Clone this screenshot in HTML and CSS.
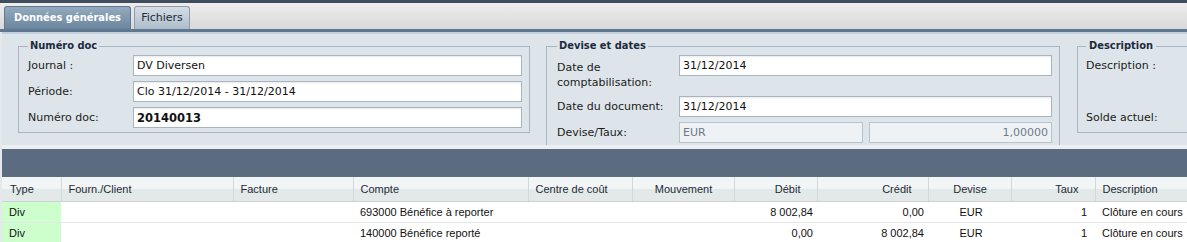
FILE: index.html
```html
<!DOCTYPE html>
<html lang="fr">
<head>
    <meta charset="UTF-8">
    <title>Écriture diverse</title>
    <link rel="stylesheet" href="styles.css">
</head>
<body>
    <div class="topbar"></div>
    <div class="tabs">
        <div class="tab active">Données générales</div>
        <div class="tab">Fichiers</div>
    </div>

    <div class="main">
        <div class="panel">
            <fieldset class="group g-doc">
                <legend>Numéro doc</legend>
                <div class="row"><label>Journal :</label><input class="field" type="text" value="DV Diversen" readonly></div>
                <div class="row"><label>Période:</label><input class="field" type="text" value="Clo 31/12/2014 - 31/12/2014" readonly></div>
                <div class="row"><label>Numéro doc:</label><input class="field num" type="text" value="20140013" readonly></div>
            </fieldset>

            <fieldset class="group g-dates">
                <legend>Devise et dates</legend>
                <div class="row two"><label>Date de<br>comptabilisation:</label><input class="field" type="text" value="31/12/2014" readonly></div>
                <div class="row"><label>Date du document:</label><input class="field" type="text" value="31/12/2014" readonly></div>
                <div class="row"><label>Devise/Taux:</label>
                    <div class="pair">
                        <input class="field off" type="text" value="EUR" readonly>
                        <input class="field off right" type="text" value="1,00000" readonly>
                    </div>
                </div>
            </fieldset>

            <fieldset class="group g-desc">
                <legend>Description</legend>
                <div class="row"><label>Description :</label></div>
                <div class="row"></div>
                <div class="row"><label>Solde actuel:</label></div>
            </fieldset>
        </div>

        <div class="strip"></div>
        <div class="toolbar"></div>

        <table class="grid">
            <colgroup>
                <col style="width:59px"><col style="width:172px"><col style="width:120px">
                <col style="width:175px"><col style="width:104px"><col style="width:102px">
                <col style="width:83px"><col style="width:111px"><col style="width:83px">
                <col style="width:84px"><col style="width:92px">
            </colgroup>
            <thead>
                <tr>
                    <th class="first">Type</th>
                    <th>Fourn./Client</th>
                    <th>Facture</th>
                    <th>Compte</th>
                    <th>Centre de coût</th>
                    <th class="mid">Mouvement</th>
                    <th class="num">Débit</th>
                    <th class="num">Crédit</th>
                    <th class="mid">Devise</th>
                    <th class="num">Taux</th>
                    <th>Description</th>
                </tr>
            </thead>
            <tbody>
                <tr>
                    <td class="type">Div</td>
                    <td></td>
                    <td></td>
                    <td>693000 Bénéfice à reporter</td>
                    <td></td>
                    <td></td>
                    <td class="num">8 002,84</td>
                    <td class="num">0,00</td>
                    <td class="mid">EUR</td>
                    <td class="num rate">1</td>
                    <td>Clôture en cours</td>
                </tr>
                <tr>
                    <td class="type">Div</td>
                    <td></td>
                    <td></td>
                    <td>140000 Bénéfice reporté</td>
                    <td></td>
                    <td></td>
                    <td class="num">0,00</td>
                    <td class="num">8 002,84</td>
                    <td class="mid">EUR</td>
                    <td class="num rate">1</td>
                    <td>Clôture en cours</td>
                </tr>
            </tbody>
        </table>
    </div>
</body>
</html>
```

FILE: styles.css
```css
*{
    margin: 0;
    padding: 0;
    box-sizing: border-box;
}
body{
    width: 1187px;
    height: 242px;
    overflow: hidden;
    background-color: #fff;
    font-family: "DejaVu Sans", sans-serif;
    font-size: 11px;
    color: #1b1b1b;
}
.topbar{
    height: 3px;
    background-color: #3f4d5f;
}
.tabs{
    height: 29px;
    display: flex;
    align-items: flex-end;
    gap: 3px;
    padding-left: 4px;
    background: linear-gradient(#ededed, #d9d9d9);
    border-bottom: 3px solid #5e7892;
}
.tab{
    width: 56px;
    height: 23px;
    line-height: 21px;
    text-align: center;
    border: 1px solid #8d9dad;
    border-bottom: 0;
    border-radius: 3px 3px 0 0;
    background: linear-gradient(#d5dde4, #aebdca);
    color: #1f2b39;
}
.tab.active{
    width: 127px;
    font-family: "DejaVu Sans Condensed", "DejaVu Sans", sans-serif;
    font-stretch: condensed;
    font-weight: bold;
    color: #fff;
    border-color: #5e7892;
    background: linear-gradient(#94aabf, #6a859e);
}
.main{
    border-left: 2px solid #e6e9ec;
}
.panel{
    height: 113px;
    overflow: hidden;
    display: flex;
    align-items: flex-start;
    gap: 16px;
    padding: 5px 0 0 16px;
    background-color: #dee5ea;
    border-top: 2px solid #c3d0db;
}
.group{
    flex: none;
    border: 1px solid #a9b5c1;
    padding: 0 7px 4px 9px;
}
.group legend{
    padding: 0 2px;
    line-height: 14px;
    font-family: "DejaVu Sans Condensed", "DejaVu Sans", sans-serif;
    font-stretch: condensed;
    font-weight: bold;
    color: #1c2a3b;
}
.g-doc{
    width: 512px;
}
.g-dates{
    width: 514px;
    padding-left: 10px;
}
.g-desc{
    width: 200px;
    margin-left: 1px;
    padding-left: 8px;
}
.g-desc legend{
    padding: 0 3px;
}
.row{
    display: grid;
    grid-template-columns: 105px 1fr;
    align-items: center;
    min-height: 21px;
    margin-top: 5px;
}
.row:first-of-type{
    margin-top: 2px;
}
.g-dates .row{
    grid-template-columns: 122px 1fr;
}
.g-dates .row.two{
    align-items: start;
    margin-bottom: 6px;
}
.g-dates .row.two label{
    padding-top: 5px;
    line-height: 15px;
}
.field{
    width: 100%;
    height: 21px;
    border: 1px solid #a7b4c1;
    background-color: #fff;
    padding: 0 3px;
    font-family: "DejaVu Sans", sans-serif;
    font-size: 11px;
    color: #111;
    box-shadow: inset 0 2px 2px -1px rgba(0,0,0,0.09);
    outline: none;
}
.field.num{
    font-weight: bold;
    font-size: 11.5px;
}
.pair{
    display: flex;
    gap: 6px;
}
.field.off{
    background-color: #eff2f4;
    border-color: #b8c3cc;
    color: #6b7b8b;
    box-shadow: none;
}
.field.right{
    text-align: right;
}
.strip{
    height: 4px;
    background-color: #eceff1;
}
.toolbar{
    height: 28px;
    background-color: #5b6c80;
}
.grid{
    width: 1185px;
    table-layout: fixed;
    border-collapse: collapse;
    font-family: "Liberation Sans", Arial, sans-serif;
    font-size: 11px;
}
.grid th{
    height: 24px;
    padding: 0 6px 0 7px;
    text-align: left;
    font-weight: normal;
    color: #1e2a36;
    background: linear-gradient(#f2f5f6 50%, #e3e9e9 50%);
    border-right: 1px solid #d1d8da;
    border-bottom: 1px solid #cbd3d5;
    white-space: nowrap;
}
.grid th.first{
    padding-left: 8px;
}
.grid th.mid{
    text-align: center;
}
.grid th.num{
    text-align: right;
    padding-right: 16px;
}
.grid td{
    height: 21px;
    padding: 0 4px 0 7px;
    border-bottom: 1px solid #e4e7e8;
    white-space: nowrap;
    color: #111;
}
.grid td.type{
    background-color: #ccffcc;
}
.grid td.mid{
    text-align: center;
}
.grid td.num{
    text-align: right;
}
.grid td.rate{
    padding-right: 8px;
}
```
